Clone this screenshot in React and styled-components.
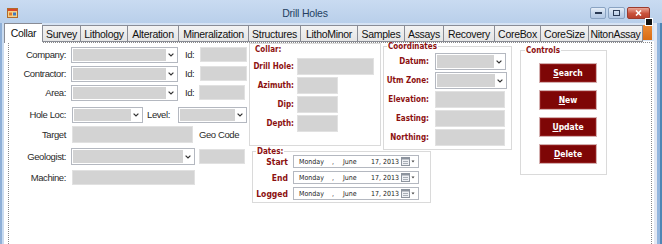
import React from "react";
import styled, { createGlobalStyle } from "styled-components";

const GlobalStyle = createGlobalStyle`
  html, body { margin: 0; padding: 0; background: #fff; }
  body { font-family: "Liberation Sans", Arial, sans-serif; }
`;

const sans = `"Liberation Sans", Arial, sans-serif`;
const verd = `"DejaVu Sans Condensed", "DejaVu Sans", Verdana, sans-serif`;
const darkRed = "#8c1010";

const Window = styled.div`
  position: relative;
  width: 662px;
  height: 244px;
  overflow: hidden;
  display: flex;
  flex-direction: column;
  background: #d6e3f3;
`;

const TitleBar = styled.div`
  height: 23px;
  flex: none;
  display: grid;
  grid-template-columns: 20px 1fr 72px;
  align-items: start;
  background: linear-gradient(#c9dbf1, #b9cfea);
`;

const AppIcon = styled.svg`
  margin: 8px 0 0 7px;
`;

const Title = styled.div`
  text-align: center;
  padding-top: 7px;
  font-family: ${sans};
  font-size: 10.5px;
  letter-spacing: -0.2px;
  color: #243f62;
`;

const WinButtons = styled.div`
  display: flex;
  gap: 2px;
  padding-top: 7px;
`;

const WinButton = styled.div`
  width: ${p => p.$w}px;
  height: 12px;
  box-sizing: border-box;
  border: 1px solid ${p => (p.$close ? "#9b3b2e" : "#8aa3c2")};
  border-radius: 2px;
  background: ${p =>
    p.$close
      ? "linear-gradient(#e9a596, #c9523c 55%, #b8412d)"
      : "linear-gradient(#e6eef8, #c3d4ea 55%, #b3c8e4)"};
  display: flex;
  align-items: center;
  justify-content: center;
`;

const Body = styled.div`
  flex: 1;
  display: flex;
  min-height: 0;
`;

const LeftFrame = styled.div`
  width: 4px;
  flex: none;
  background: linear-gradient(90deg, #8fb0d8 0 2px, #c9dbf0 2px);
`;

const RightFrame = styled.div`
  width: 8px;
  flex: none;
  background: linear-gradient(90deg, #e3e8f3 0 3px, #93b6de 3px 6px, #4f86b5 6px);
`;

const Client = styled.div`
  flex: 1;
  display: flex;
  flex-direction: column;
  min-width: 0;
`;

const TabStrip = styled.div`
  height: 19px;
  flex: none;
  display: flex;
  align-items: flex-end;
`;

const Tab = styled.div`
  width: ${p => p.$w}px;
  height: ${p => (p.$active ? 20 : 17)}px;
  margin-bottom: ${p => (p.$active ? -1 : 0)}px;
  box-sizing: border-box;
  flex: none;
  border: 1px solid #898c95;
  border-right: ${p => (p.$last ? "1px solid #898c95" : "none")};
  border-bottom: ${p => (p.$active ? "none" : "1px solid #898c95")};
  background: ${p => (p.$active ? "#fff" : "linear-gradient(#f3f3f3, #e4e4e4)")};
  display: flex;
  align-items: center;
  justify-content: center;
  padding-bottom: ${p => (p.$active ? 2 : 0)}px;
  font-family: ${sans};
  font-size: 10.5px;
  letter-spacing: -0.3px;
  color: #111;
  white-space: nowrap;
  overflow: hidden;
  position: relative;
  z-index: ${p => (p.$active ? 1 : 0)};
`;

const TabScroll = styled.div`
  width: 9px;
  height: 15px;
  align-self: flex-start;
  margin-top: 2px;
  background: linear-gradient(#ec8a34, #d86c14);
`;

const Page = styled.div`
  flex: 1;
  display: flex;
  flex-direction: column;
  background: #fff;
  padding: 0 2px 0 4px;
  border-top: 1px solid #fff;
  margin-top: -1px;
`;

const Panel = styled.div`
  flex: 1;
  display: flex;
  align-items: flex-start;
  border: 1px dotted #8a8a8a;
  border-bottom: none;
`;

/* left form */
const LeftForm = styled.div`
  width: 240px;
  flex: none;
  padding-top: 2px;
  display: flex;
  flex-direction: column;
`;

const FormRow = styled.div`
  display: flex;
  align-items: center;
  height: 19px;
  margin-top: ${p => p.$mt || 0}px;
`;

const FieldLabel = styled.span`
  width: 57px;
  flex: none;
  margin-right: ${p => (p.$gap ?? 5)}px;
  text-align: right;
  font-family: ${sans};
  font-size: 9.5px;
  letter-spacing: -0.4px;
  color: #2a2a2a;
  white-space: nowrap;
`;

const InlineLabel = styled.span`
  width: ${p => (p.$w ? `${p.$w}px` : "auto")};
  flex: none;
  margin-left: ${p => p.$ml || 0}px;
  font-family: ${sans};
  font-size: 9.5px;
  letter-spacing: -0.4px;
  color: #2a2a2a;
  white-space: nowrap;
`;

const Box = styled.div`
  width: ${p => p.$w}px;
  height: ${p => p.$h || 15}px;
  flex: none;
  margin-left: ${p => p.$ml || 0}px;
  background: #d3d3d3;
  box-shadow: inset 0 0 0 1px #e1e1e1;
`;

const ComboFrame = styled.div`
  width: ${p => p.$w}px;
  height: ${p => p.$h || 16}px;
  flex: none;
  margin-left: ${p => p.$ml || 0}px;
  box-sizing: border-box;
  border: 1px solid #b4b8c0;
  padding: 1px;
  display: flex;
  background: #fff;
`;

const ComboFill = styled.div`
  flex: 1;
  background: #d3d3d3;
`;

const ComboArrow = styled.div`
  width: 10px;
  display: flex;
  align-items: center;
  justify-content: center;
`;

const Combo = props => (
  <ComboFrame {...props}>
    <ComboFill />
    <ComboArrow>
      <svg width="6" height="4" viewBox="0 0 6 4">
        <polyline points="0.6,0.6 3,3 5.4,0.6" fill="none" stroke="#333" strokeWidth="1.2" />
      </svg>
    </ComboArrow>
  </ComboFrame>
);

/* group boxes */
const Mid = styled.div`
  width: 263px;
  flex: none;
  display: grid;
  grid-template-columns: 132px 129px;
  column-gap: 2px;
  align-items: start;
`;

const CollarBox = styled.div`
  box-sizing: border-box;
  border: 1px solid #dadada;
  padding: 1px 0 13px;
  display: flex;
  flex-direction: column;
  gap: 2px;
`;

const CollarTitle = styled.div`
  height: 10px;
  line-height: 10px;
  padding-left: 5px;
  margin-bottom: 1px;
  font-family: ${verd};
  font-weight: bold;
  font-size: 8px;
  color: ${darkRed};
`;

const Group = styled.fieldset`
  margin: ${p => p.$m || "0"};
  padding: ${p => p.$pad || "0"};
  width: ${p => p.$w}px;
  box-sizing: border-box;
  min-width: 0;
  border: 1px solid #dadada;
  display: flex;
  flex-direction: column;
  gap: ${p => p.$gap ?? 2}px;
  grid-column: ${p => p.$span || "auto"};
  justify-self: start;
`;

const Legend = styled.legend`
  padding: 0 1px;
  margin-left: ${p => p.$ml ?? 4}px;
  line-height: 7px;
  font-family: ${verd};
  font-weight: bold;
  font-size: 8px;
  color: ${darkRed};
`;

const GroupRow = styled.div`
  display: flex;
  align-items: center;
  height: ${p => p.$h || 17}px;
`;

const GroupLabel = styled.span`
  width: ${p => p.$w}px;
  flex: none;
  margin-right: ${p => p.$gap}px;
  text-align: right;
  font-family: ${verd};
  font-weight: bold;
  font-size: ${p => p.$size || 8}px;
  color: ${darkRed};
  white-space: nowrap;
`;

const DateBox = styled.div`
  width: 126px;
  height: 13px;
  box-sizing: border-box;
  border: 1px solid #b4b8c0;
  display: flex;
  align-items: center;
  padding: 0 3px 0 5px;
  font-family: ${verd};
  font-size: 7px;
  color: #222;
  white-space: nowrap;
`;

const Seg = styled.span`
  width: ${p => (p.$w ? `${p.$w}px` : "auto")};
  flex: ${p => (p.$w ? "none" : 1)};
`;

const Controls = styled(Group)`
  margin: 4px 0 0 8px;
`;

const ActionButton = styled.div`
  width: 58px;
  height: 20px;
  box-sizing: border-box;
  border: 1px solid #d4b0b0;
  background: #7e0606;
  box-shadow: inset 0 0 0 1px #8f1a1a;
  display: flex;
  align-items: center;
  justify-content: center;
  font-family: ${verd};
  font-weight: bold;
  font-size: 8.5px;
  color: #fff;
  u { text-decoration: underline; }
`;

const SmartTag = styled.div`
  position: absolute;
  left: 645px;
  top: 18px;
  width: 6px;
  height: 6px;
  background: #111;
  border: 1px solid #fff;
`;

const tabs = [
  ["Collar", 38],
  ["Survey", 38],
  ["Lithology", 47],
  ["Alteration", 51],
  ["Mineralization", 70],
  ["Structures", 52],
  ["LithoMinor", 57],
  ["Samples", 47],
  ["Assays", 39],
  ["Recovery", 51],
  ["CoreBox", 46],
  ["CoreSize", 48],
  ["NitonAssay", 55],
];

const DateField = () => (
  <DateBox>
    <Seg $w={33}>Monday</Seg>
    <Seg $w={11}>,</Seg>
    <Seg $w={28}>June</Seg>
    <Seg>17, 2013</Seg>
    <svg width="14" height="9" viewBox="0 0 14 9">
      <rect x="0.5" y="0.5" width="8" height="8" fill="#eef0f4" stroke="#8d949e" />
      <rect x="0.5" y="0.5" width="8" height="2" fill="#8d949e" />
      <path d="M2 4.5h5M2 6.5h5" stroke="#a8aeb6" />
      <path d="M10.5 3.5h3l-1.5 2z" fill="#444" />
    </svg>
  </DateBox>
);

const ulFirst = t => (
  <>
    <u>{t[0]}</u>
    {t.slice(1)}
  </>
);

export default function App() {
  return (
    <>
      <GlobalStyle />
      <Window>
        <TitleBar>
          <AppIcon width="11" height="10" viewBox="0 0 11 10">
            <rect x="0.5" y="0.5" width="10" height="9" fill="#f4d28a" stroke="#b06a2a" />
            <rect x="1" y="1" width="9" height="2" fill="#d9462a" />
            <rect x="2" y="4.5" width="3" height="3" fill="#e07a2a" />
            <rect x="6" y="4.5" width="3" height="3" fill="#3f78c0" />
          </AppIcon>
          <Title>Drill Holes</Title>
          <WinButtons>
            <WinButton $w={16}>
              <svg width="7" height="4" viewBox="0 0 7 4">
                <rect x="0" y="1" width="7" height="2" fill="#2a3a55" />
              </svg>
            </WinButton>
            <WinButton $w={17}>
              <svg width="7" height="6" viewBox="0 0 7 6">
                <rect x="0.5" y="0.5" width="6" height="5" fill="none" stroke="#2a3a55" />
              </svg>
            </WinButton>
            <WinButton $w={23} $close>
              <svg width="7" height="6" viewBox="0 0 7 6">
                <path d="M1 0.5l5 5M6 0.5l-5 5" stroke="#fff" strokeWidth="1.6" />
              </svg>
            </WinButton>
          </WinButtons>
        </TitleBar>
        <Body>
          <LeftFrame />
          <Client>
            <TabStrip>
              {tabs.map(([name, w], i) => (
                <Tab key={name} $w={w} $active={i === 0} $last={i === tabs.length - 1}>
                  {name}
                </Tab>
              ))}
              <TabScroll />
            </TabStrip>
            <Page>
              <Panel>
                <LeftForm>
                  <FormRow>
                    <FieldLabel>Company:</FieldLabel>
                    <Combo $w={107} />
                    <InlineLabel $ml={7} $w={15}>Id:</InlineLabel>
                    <Box $w={47} />
                  </FormRow>
                  <FormRow>
                    <FieldLabel>Contractor:</FieldLabel>
                    <Combo $w={107} />
                    <InlineLabel $ml={7} $w={15}>Id:</InlineLabel>
                    <Box $w={47} />
                  </FormRow>
                  <FormRow>
                    <FieldLabel>Area:</FieldLabel>
                    <Combo $w={107} />
                    <InlineLabel $ml={7} $w={14}>Id:</InlineLabel>
                    <Box $w={46} />
                  </FormRow>
                  <FormRow $mt={3}>
                    <FieldLabel $gap={6}>Hole Loc:</FieldLabel>
                    <Combo $w={71} />
                    <InlineLabel $ml={4} $w={31}>Level:</InlineLabel>
                    <Combo $w={69} />
                  </FormRow>
                  <FormRow $mt={1}>
                    <FieldLabel $gap={6}>Target</FieldLabel>
                    <Box $w={121} $h={17} />
                    <InlineLabel $ml={6}>Geo Code</InlineLabel>
                  </FormRow>
                  <FormRow $mt={3}>
                    <FieldLabel>Geologist:</FieldLabel>
                    <Combo $w={124} $h={17} />
                    <Box $w={46} $ml={4} />
                  </FormRow>
                  <FormRow $mt={2}>
                    <FieldLabel $gap={6}>Machine:</FieldLabel>
                    <Box $w={123} />
                  </FormRow>
                </LeftForm>

                <Mid>
                  <CollarBox>
                    <CollarTitle>Collar:</CollarTitle>
                    <GroupRow>
                      <GroupLabel $w={44} $gap={3}>Drill Hole:</GroupLabel>
                      <Box $w={77} $h={17} />
                    </GroupRow>
                    <GroupRow>
                      <GroupLabel $w={44} $gap={3}>Azimuth:</GroupLabel>
                      <Box $w={41} $h={17} />
                    </GroupRow>
                    <GroupRow>
                      <GroupLabel $w={44} $gap={3}>Dip:</GroupLabel>
                      <Box $w={41} $h={17} />
                    </GroupRow>
                    <GroupRow>
                      <GroupLabel $w={44} $gap={3}>Depth:</GroupLabel>
                      <Box $w={41} $h={17} />
                    </GroupRow>
                  </CollarBox>

                  <Group $w={129} $pad="3px 0 3px">
                    <Legend $ml={3}>Coordinates</Legend>
                    <GroupRow>
                      <GroupLabel $w={45} $gap={6}>Datum:</GroupLabel>
                      <Combo $w={71} $h={17} />
                    </GroupRow>
                    <GroupRow>
                      <GroupLabel $w={45} $gap={6}>Utm Zone:</GroupLabel>
                      <Combo $w={72} $h={17} />
                    </GroupRow>
                    <GroupRow>
                      <GroupLabel $w={45} $gap={6}>Elevation:</GroupLabel>
                      <Box $w={70} $h={17} />
                    </GroupRow>
                    <GroupRow>
                      <GroupLabel $w={45} $gap={6}>Easting:</GroupLabel>
                      <Box $w={70} $h={17} />
                    </GroupRow>
                    <GroupRow>
                      <GroupLabel $w={45} $gap={6}>Northing:</GroupLabel>
                      <Box $w={70} $h={17} />
                    </GroupRow>
                  </Group>

                  <Group $w={179} $span="1 / span 2" $m="-2px 0 0 3px" $pad="0 0 2px" $gap={3}>
                    <Legend $ml={3}>Dates:</Legend>
                    <GroupRow $h={13}>
                      <GroupLabel $w={35} $gap={5} $size={8.5}>Start</GroupLabel>
                      <DateField />
                    </GroupRow>
                    <GroupRow $h={13}>
                      <GroupLabel $w={35} $gap={5} $size={8.5}>End</GroupLabel>
                      <DateField />
                    </GroupRow>
                    <GroupRow $h={13}>
                      <GroupLabel $w={35} $gap={5} $size={8.5}>Logged</GroupLabel>
                      <DateField />
                    </GroupRow>
                  </Group>
                </Mid>

                <Controls $w={87} $pad="9px 9px 10px 18px" $gap={7}>
                  <Legend $ml={-14}>Controls</Legend>
                  <ActionButton>{ulFirst("Search")}</ActionButton>
                  <ActionButton>{ulFirst("New")}</ActionButton>
                  <ActionButton>{ulFirst("Update")}</ActionButton>
                  <ActionButton>{ulFirst("Delete")}</ActionButton>
                </Controls>
              </Panel>
            </Page>
          </Client>
          <RightFrame />
        </Body>
        <SmartTag />
      </Window>
    </>
  );
}
